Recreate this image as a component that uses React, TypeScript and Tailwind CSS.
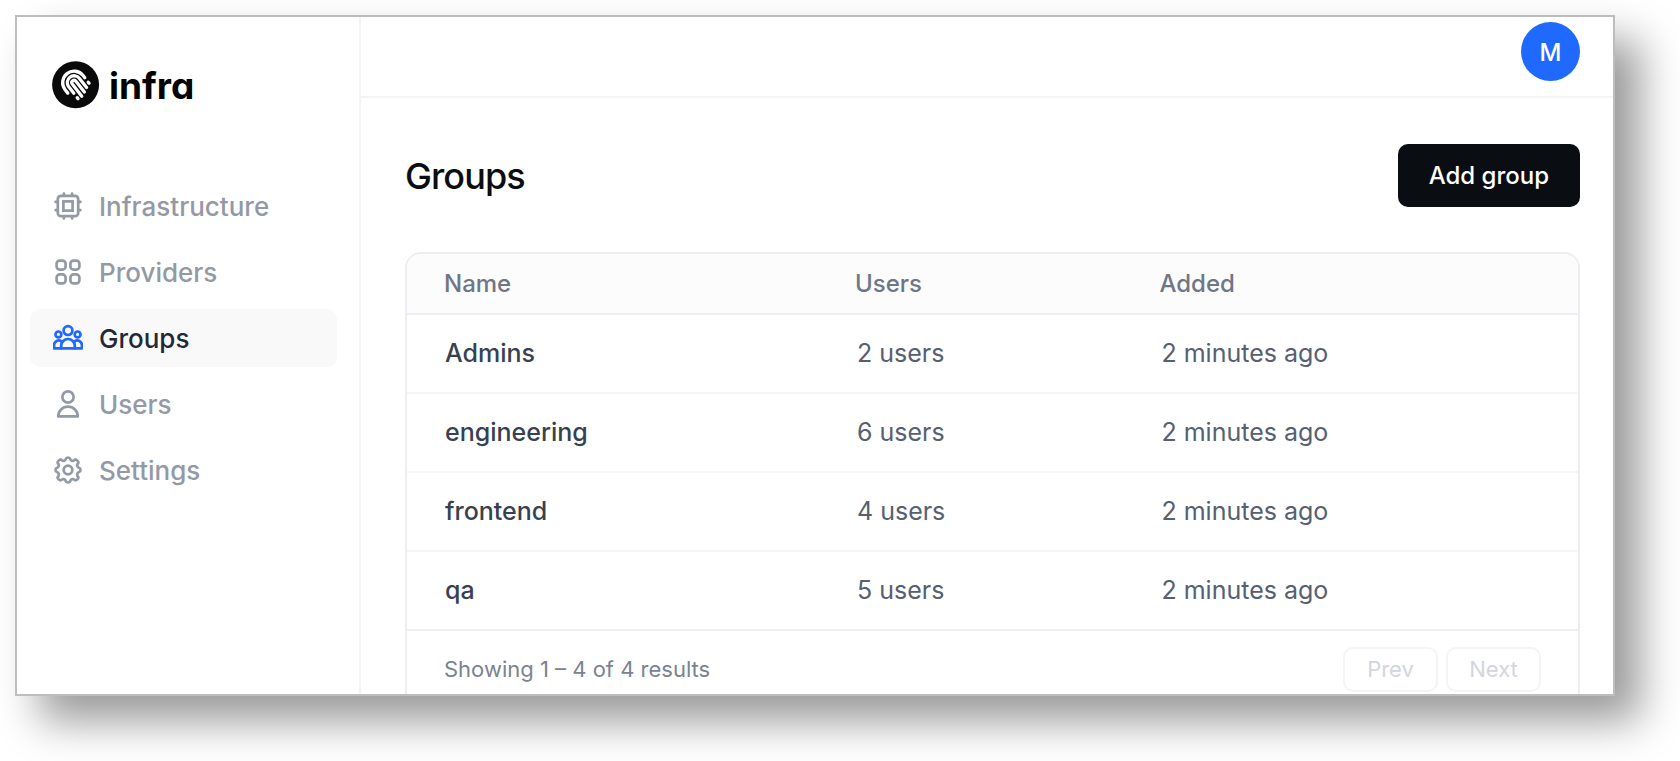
import type { ReactNode } from 'react';

const groups = [
  { name: 'Admins', users: 2, added: '2 minutes ago' },
  { name: 'engineering', users: 6, added: '2 minutes ago' },
  { name: 'frontend', users: 4, added: '2 minutes ago' },
  { name: 'qa', users: 5, added: '2 minutes ago' },
];

function Icon({ children }: { children: ReactNode }) {
  return (
    <svg
      className="size-[30px] shrink-0"
      viewBox="0 0 30 30"
      fill="none"
      stroke="currentColor"
      strokeWidth="2.7"
      strokeLinecap="round"
      strokeLinejoin="round"
      aria-hidden="true"
    >
      {children}
    </svg>
  );
}

function ChipIcon() {
  return (
    <Icon>
      <rect x="4.8" y="4.8" width="20.4" height="20.4" rx="3.2" />
      <rect x="10.4" y="10.4" width="9.2" height="9.2" strokeLinejoin="miter" />
      <path d="M10.9 4.5V2.6M19.1 4.5V2.6M10.9 27.4v-1.9M19.1 27.4v-1.9M4.5 10.9H2.6M4.5 19.1H2.6M27.4 10.9h-1.9M27.4 19.1h-1.9" />
    </Icon>
  );
}

function GridIcon() {
  return (
    <Icon>
      <rect x="3.6" y="3.6" width="9" height="9" rx="3.2" />
      <rect x="17.4" y="3.6" width="9" height="9" rx="3.2" />
      <rect x="3.6" y="17.4" width="9" height="9" rx="3.2" />
      <rect x="17.4" y="17.4" width="9" height="9" rx="3.2" />
    </Icon>
  );
}

function GroupsIcon() {
  return (
    <Icon>
      <circle cx="15" cy="7.6" r="4.4" />
      <circle cx="5.4" cy="11.4" r="2.9" />
      <circle cx="24.6" cy="11.4" r="2.9" />
      <path d="M8.2 25.4v-2.6a6.8 6.8 0 0 1 13.6 0v2.6" />
      <path d="M8.4 18.4a4.6 4.6 0 0 0-7.3 3.6v3.4h27.8V22a4.6 4.6 0 0 0-7.3-3.6" />
    </Icon>
  );
}

function UserIcon() {
  return (
    <Icon>
      <circle cx="15" cy="8" r="5.6" />
      <path d="M5.2 27.4a9.8 9.8 0 0 1 19.6 0Z" />
    </Icon>
  );
}

function GearIcon() {
  return (
    <Icon>
      <path d="M12.7 4.2a2.4 2.4 0 0 1 4.6 0 2.4 2.4 0 0 0 3.4 1.4 2.4 2.4 0 0 1 3.7 3.7 2.4 2.4 0 0 0 1.4 3.400 2.400 2.400 0 0 1 0 4.600 2.400 2.400 0 0 0-1.400 3.400 2.400 2.400 0 0 1-3.700 3.700 2.400 2.400 0 0 0-3.400 1.400 2.400 2.400 0 0 1-4.600 0 2.400 2.400 0 0 0-3.400-1.400 2.400 2.400 0 0 1-3.700-3.700 2.400 2.400 0 0 0-1.400-3.400 2.400 2.400 0 0 1 0-4.600 2.400 2.400 0 0 0 1.400-3.400 2.400 2.400 0 0 1 3.700-3.700 2.400 2.400 0 0 0 3.400-1.400Z" />
      <circle cx="15" cy="15" r="4.3" />
    </Icon>
  );
}

function Logo() {
  return (
    <a href="#" className="flex items-center gap-[9px] text-black">
      <svg className="size-12" viewBox="0 0 48 48" fill="none" aria-hidden="true">
        <circle cx="23.6" cy="23.8" r="23.5" fill="#0a0a0a" />
        <g transform="translate(22.1 21.6) rotate(-38) scale(1.1)" stroke="#fff" strokeWidth="3" strokeLinecap="round">
          <path d="M-10.4 4V0a10.4 10.4 0 0 1 20.8 0v2.5M10.4 7.6v1.2" />
          <path d="M-6.2 7.5V0A6.200 6.200 0 0 1 6.200 0v10.500M-6.200 12.500v1.200" />
          <path d="M-2.100 14V0A2.100 2.100 0 0 1 2.100 0v12.500" />
        </g>
      </svg>
      <span className="pt-0.5 text-[37px] leading-10 font-bold [font-feature-settings:'cv11']">infra</span>
    </a>
  );
}

const nav = [
  { label: 'Infrastructure', icon: <ChipIcon /> },
  { label: 'Providers', icon: <GridIcon /> },
  { label: 'Groups', icon: <GroupsIcon />, active: true },
  { label: 'Users', icon: <UserIcon /> },
  { label: 'Settings', icon: <GearIcon /> },
];

export default function App() {
  return (
    <div className="h-screen bg-white pt-[15px] pr-[65px] pb-[65px] pl-[15px] font-[Inter,sans-serif]">
      <div className="flex h-full overflow-hidden border-2 border-[#bdbdbd] bg-white shadow-[25px_25px_40px_rgba(0,0,0,0.4)]">
        <aside className="w-[344px] shrink-0 border-r-2 border-[#f4f4f5] pt-11 pr-[22px] pl-[13px]">
          <div className="pl-[22px]">
            <Logo />
          </div>
          <nav aria-label="Main" className="mt-[68px] flex flex-col gap-2">
            {nav.map((item) => (
              <a
                key={item.label}
                href="#"
                aria-current={item.active ? 'page' : undefined}
                className={
                  item.active
                    ? 'flex h-[58px] items-center gap-4 rounded-[10px] bg-[#f9f9f9] px-[23px] text-[26px] font-medium text-[#1f2937]'
                    : 'flex h-[58px] items-center gap-4 rounded-[10px] px-[23px] text-[26px] font-medium text-[#9399a5]'
                }
              >
                <span className={item.active ? 'text-[#1f69ff]' : 'text-[#9399a5]'}>{item.icon}</span>
                {item.label}
              </a>
            ))}
          </nav>
        </aside>

        <div className="min-w-0 flex-1">
          <header className="flex h-[81px] items-start justify-end border-b-2 border-[#f4f4f5] pt-[5px] pr-[33px]">
            <button
              type="button"
              className="size-[59px] rounded-full bg-[#1f69ff] pt-0.5 text-2xl font-medium text-white"
            >
              M
            </button>
          </header>

          <main className="pt-[46px] pr-[33px] pl-11">
            <div className="flex items-center justify-between">
              <h1 className="text-4xl font-medium tracking-tight text-[#0b0d12]">Groups</h1>
              <button
                type="button"
                className="h-[63px] rounded-[10px] bg-[#0a0d12] px-[31px] text-2xl font-medium text-white"
              >
                Add group
              </button>
            </div>

            <section className="mt-[45px] overflow-hidden rounded-2xl border-2 border-[#ededf2]">
              <table className="w-full table-fixed text-left">
                <colgroup>
                  <col className="w-[38%]" />
                  <col className="w-[26%]" />
                  <col />
                </colgroup>
                <thead className="bg-[#fcfcfc] text-2xl text-[#6f7685]">
                  <tr className="h-[60px] border-b-2 border-[#ededf2]">
                    <th scope="col" className="pl-[37px] font-medium">Name</th>
                    <th scope="col" className="pl-[3px] font-medium">Users</th>
                    <th scope="col" className="pl-[3px] font-medium">Added</th>
                  </tr>
                </thead>
                <tbody className="text-[25px] text-[#566070]">
                  {groups.map((group) => (
                    <tr key={group.name} className="h-[79px] border-b-2 border-[#f5f5f7] last:border-[#ededf2]">
                      <td className="pl-[38px] font-medium text-[#374151]">{group.name}</td>
                      <td className="pl-[5px]">{group.users} users</td>
                      <td className="pl-[5px]">{group.added}</td>
                    </tr>
                  ))}
                </tbody>
              </table>
              <div className="flex h-[76px] items-center justify-between px-[37px] text-[22px] text-[#7b8290]">
                <p>Showing 1 – 4 of 4 results</p>
                <div className="flex gap-2 text-[#d3d6dc]">
                  <button type="button" disabled className="h-[45px] w-[95px] rounded-[10px] border-2 border-[#f4f4f5]">
                    Prev
                  </button>
                  <button type="button" disabled className="h-[45px] w-[95px] rounded-[10px] border-2 border-[#f4f4f5]">
                    Next
                  </button>
                </div>
              </div>
            </section>
          </main>
        </div>
      </div>
    </div>
  );
}
